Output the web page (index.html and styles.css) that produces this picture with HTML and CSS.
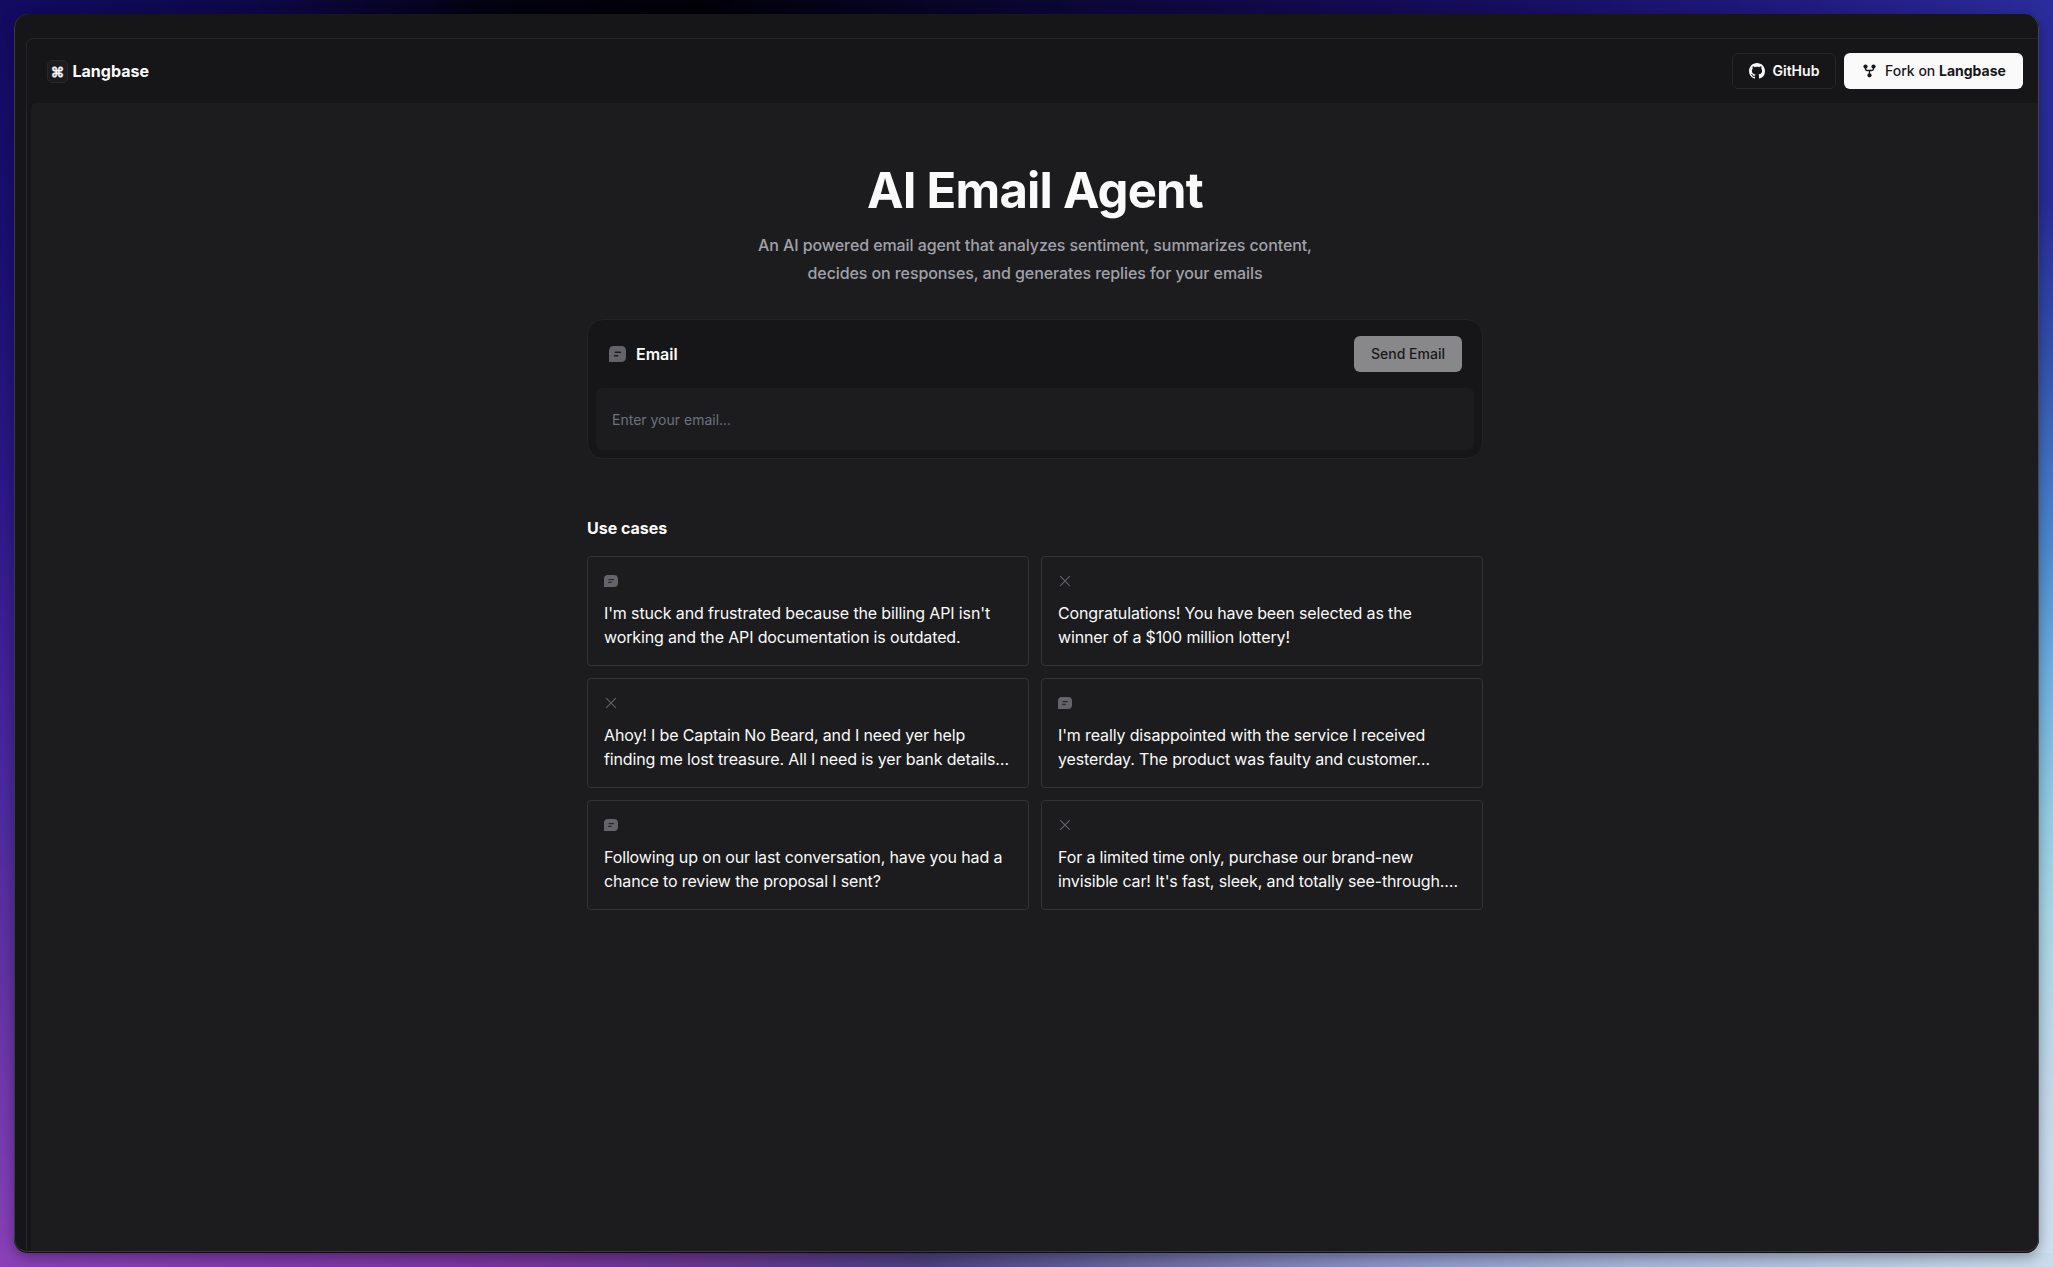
FILE: index.html
```html
<!DOCTYPE html>
<html lang="en">
<head>
<meta charset="utf-8">
<title>AI Email Agent</title>
<link rel="stylesheet" href="styles.css">
</head>
<body>
<svg class="defs" width="0" height="0" aria-hidden="true">
  <symbol id="note" viewBox="0 0 14 12" preserveAspectRatio="none">
    <path fill="currentColor" d="M3.8 0h6.400C12.600 0 14 1.400 14 3.800v4.400c0 2.400-1.400 3.800-3.800 3.800H0V3.800C0 1.400 1.400 0 3.800 0z"/>
    <path class="note-lines" d="M5 4.700h4.500M4.500 7.300h2.800"/>
  </symbol>
  <symbol id="cross" viewBox="0 0 14 12">
    <path d="M2.200 1.200l9.600 9.600M11.800 1.200l-9.600 9.600" fill="none" stroke="currentColor" stroke-width="1.100"/>
  </symbol>
</svg>
<div class="window">
  <div class="panel">
    <header class="header">
      <div class="brand"><span class="brand-key">⌘</span><span>Langbase</span></div>
      <nav class="actions">
        <a class="button button-outline">
          <svg width="16" height="16" viewBox="0 0 16 16" fill="currentColor"><path d="M8 0C3.580 0 0 3.580 0 8c0 3.540 2.290 6.530 5.470 7.590.4.070.55-.17.55-.38 0-.19-.01-.82-.01-1.490-2.010.37-2.530-.49-2.690-.94-.09-.23-.48-.94-.82-1.130-.28-.15-.68-.52-.01-.53.63-.01 1.080.58 1.230.82.72 1.210 1.870.87 2.330.66.070-.52.280-.87.510-1.070-1.780-.2-3.640-.89-3.640-3.950 0-.87.310-1.590.820-2.150-.08-.2-.36-1.020.08-2.120 0 0 .67-.21 2.200.82.640-.18 1.320-.27 2-.27s1.360.09 2 .27c1.530-1.040 2.200-.82 2.200-.82.440 1.100.160 1.920.080 2.120.510.560.820 1.270.820 2.150 0 3.070-1.870 3.750-3.650 3.950.290.250.540.730.540 1.480 0 1.070-.01 1.930-.01 2.200 0 .21.150.46.550.38A8.010 8.010 0 0 0 16 8c0-4.420-3.580-8-8-8z"/></svg>
          <span>GitHub</span>
        </a>
        <a class="button button-solid">
          <svg width="13" height="14" viewBox="0 0 13 14"><g fill="currentColor"><circle cx="2.500" cy="2.600" r="2.100"/><circle cx="10.500" cy="2.600" r="2.100"/><circle cx="6.500" cy="11.300" r="2.100"/></g><path d="M2.500 3v1.800q0 1.700 1.700 1.700h4.600q1.700 0 1.700-1.700V3M6.500 6.500V11" fill="none" stroke="currentColor" stroke-width="1.300"/></svg>
          <span>Fork on <b>Langbase</b></span>
        </a>
      </nav>
    </header>
    <main class="content">
      <h1 class="title">AI Email Agent</h1>
      <p class="subtitle">An AI powered email agent that analyzes sentiment, summarizes content,<br>decides on responses, and generates replies for your emails</p>
      <section class="composer">
        <div class="composer-head">
          <svg class="icon icon-large"><use href="#note"/></svg>
          <span class="composer-label">Email</span>
          <button class="send">Send Email</button>
        </div>
        <div class="composer-input">Enter your email...</div>
      </section>
      <h2 class="section-title">Use cases</h2>
      <section class="cases">
        <article class="case"><svg class="icon"><use href="#note"/></svg><p>I'm stuck and frustrated because the billing API isn't<br>working and the API documentation is outdated.</p></article>
        <article class="case"><svg class="icon"><use href="#cross"/></svg><p>Congratulations! You have been selected as the<br>winner of a $100 million lottery!</p></article>
        <article class="case"><svg class="icon"><use href="#cross"/></svg><p>Ahoy! I be Captain No Beard, and I need yer help<br>finding me lost treasure. All I need is yer bank details…</p></article>
        <article class="case"><svg class="icon"><use href="#note"/></svg><p>I'm really disappointed with the service I received<br>yesterday. The product was faulty and customer…</p></article>
        <article class="case"><svg class="icon"><use href="#note"/></svg><p>Following up on our last conversation, have you had a<br>chance to review the proposal I sent?</p></article>
        <article class="case"><svg class="icon"><use href="#cross"/></svg><p>For a limited time only, purchase our brand-new<br>invisible car! It's fast, sleek, and totally see-through.…</p></article>
      </section>
    </main>
  </div>
</div>
</body>
</html>
```
FILE: styles.css
```css
* { box-sizing: border-box; }
html, body { height: 100%; }
body {
  margin: 0;
  padding: 14px;
  overflow: hidden;
  font-family: Inter, "Liberation Sans", sans-serif;
  color: #fafafa;
  background:
    linear-gradient(90deg, #120b62 0%, #0d0848 12%, #030210 24%, #020108 34%, #0b0736 52%, #150d5c 72%, #221a80 88%, #2b2c9c 100%) top / 100% 14px no-repeat,
    linear-gradient(90deg, #8a41b8 0%, #7a35a0 23%, #6a3590 34%, #4c4080 45%, #8c93c4 67%, #aab6d8 80%, #c8dcec 100%) bottom / 100% 14px no-repeat,
    linear-gradient(180deg, #130a62 0%, #190f70 18%, #2c1886 38%, #48289c 60%, #6234a6 78%, #8a41b8 100%) left / 50% 100% no-repeat,
    linear-gradient(180deg, #2b2c9c 0%, #2a2c98 16%, #3350ac 28%, #4a84cc 42%, #6eaede 53%, #94cce2 64%, #a8d6e6 72%, #c4d8ea 86%, #d0e0f0 100%) right / 50% 100% no-repeat;
}
.defs { position: absolute; }
.window {
  position: relative;
  height: 100%;
  padding: 24px 0 0 12px;
  overflow: hidden;
  border-radius: 14px;
  background: #161618;
  box-shadow: 0 4px 14px rgba(0, 0, 0, .35);
}
.window::after {
  content: "";
  position: absolute;
  inset: 0;
  border-radius: inherit;
  pointer-events: none;
  box-shadow: inset 0 -1px #0c0c10, inset 1px 0 #3c3c40, inset -1px 0 #46464a, inset 0 -2px #39393c;
}
.panel {
  height: 100%;
  display: flex;
  flex-direction: column;
  padding-left: 4px;
  border: solid #26262a;
  border-width: 1px 0 0 1px;
  border-radius: 7px 0 0 0;
}
.header {
  height: 64px;
  flex: none;
  display: flex;
  align-items: center;
  justify-content: space-between;
  padding: 0 16px;
}
.brand { display: flex; align-items: center; gap: 4.5px; font-size: 16px; font-weight: 700; }
.brand-key {
  width: 21px;
  height: 23px;
  display: grid;
  place-items: center;
  border: 1px solid #29292c;
  border-radius: 5px;
  background: #1c1c1e;
  font-size: 14px;
  -webkit-text-stroke: .3px #fafafa;
}
.actions { display: flex; gap: 8px; }
.button {
  height: 36px;
  display: flex;
  align-items: center;
  border-radius: 6px;
  font-size: 14px;
  line-height: 18px;
  white-space: nowrap;
}
.button span { margin-top: -1px; }
.button-outline { width: 104px; padding-left: 16px; gap: 7.5px; border: 1px solid #27272a; font-weight: 600; }
.button-solid { width: 179px; padding-left: 19px; gap: 9px; background: #fafafa; color: #18181b; font-weight: 500; }
.button-solid b { font-weight: 700; }
.content {
  flex: 1;
  display: flex;
  flex-direction: column;
  align-items: center;
  padding-top: 56px;
  border-radius: 5px 0 0 0;
  background: #1c1c1e;
}
.title { margin: 0; font-size: 49px; line-height: 64px; font-weight: 700; letter-spacing: -.8px; }
.subtitle { margin: 8px 0 0; font-size: 16px; line-height: 28px; font-weight: 500; letter-spacing: -.09px; color: #a1a1aa; text-align: center; }
.composer {
  width: 896px;
  height: 140px;
  margin-top: 32px;
  padding: 0 8px 8px;
  border: 1px solid #242427;
  border-radius: 16px;
  background: #161618;
}
.composer-head { height: 68px; display: flex; align-items: center; padding: 0 12px 0 13px; }
.icon { width: 14px; height: 12px; display: block; color: #636369; }
.icon-large { width: 17px; height: 16px; }
.note-lines { fill: none; stroke: #1c1c1e; stroke-width: 1; stroke-linecap: round; }
.composer-label { margin-left: 10px; font-size: 16px; font-weight: 600; }
.send {
  width: 108px;
  height: 36px;
  margin-left: auto;
  padding: 0 0 1px;
  border: 0;
  border-radius: 6px;
  background: #88888a;
  color: #18181b;
  font: 500 14px Inter, sans-serif;
}
.composer-input {
  height: 62px;
  display: flex;
  align-items: center;
  padding-left: 16px;
  border-radius: 6px;
  background: #1c1c1e;
  color: #6b7280;
  font-size: 14px;
}
.section-title { width: 896px; margin: 57px 0 0; font-size: 16px; line-height: 24px; font-weight: 700; }
.cases { width: 896px; margin-top: 16px; display: grid; grid-template-columns: repeat(2, minmax(0, 1fr)); gap: 12px; }
.case { height: 110px; padding: 18px 16px 0; border: 1px solid #343437; border-radius: 4px; }
.case p { margin: 14px 0 0; font-size: 16px; line-height: 24px; letter-spacing: -.135px; white-space: nowrap; }
```
